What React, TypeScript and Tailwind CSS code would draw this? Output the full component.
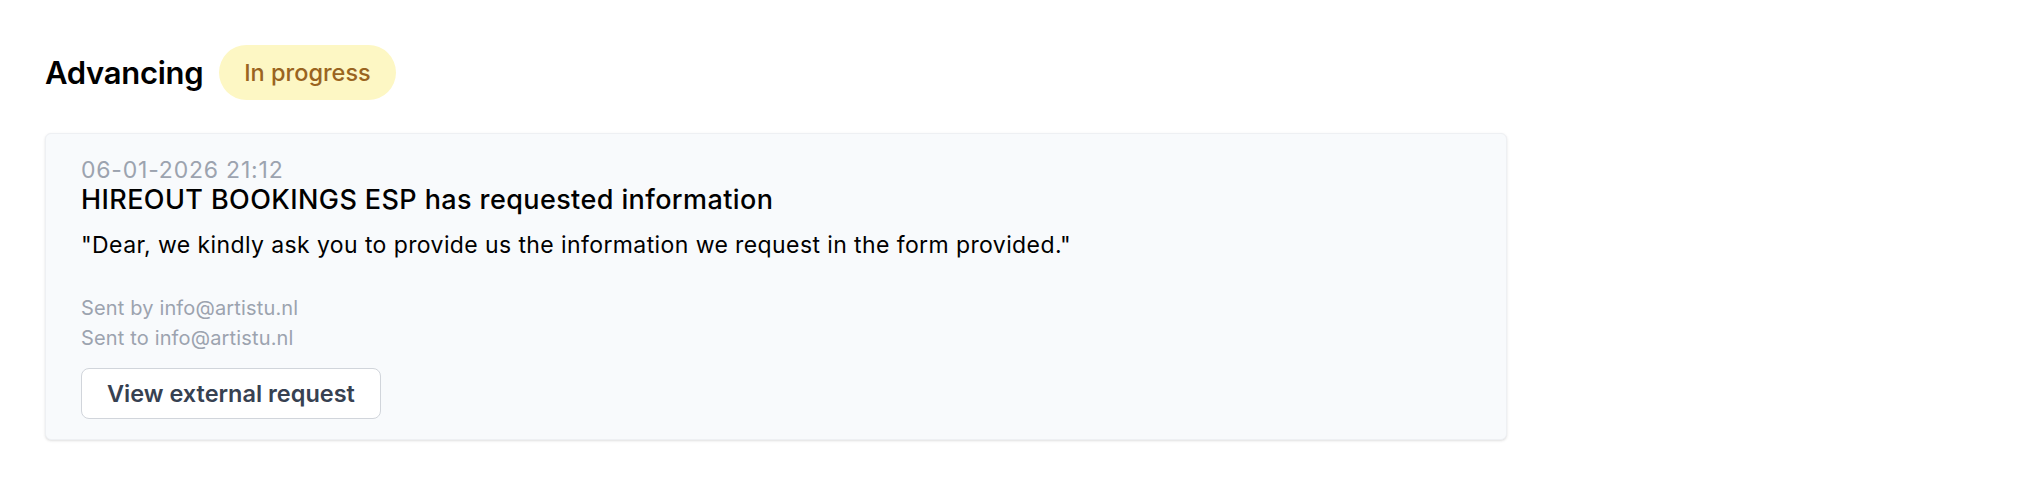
import React from "react";

type Request = {
	sentAt: string;
	title: string;
	message: string;
	sentBy: string;
	sentTo: string;
};

const request: Request = {
	sentAt: "06-01-2026 21:12",
	title: "HIREOUT BOOKINGS ESP has requested information",
	message:
		'"Dear, we kindly ask you to provide us the information we request in the form provided."',
	sentBy: "info@artistu.nl",
	sentTo: "info@artistu.nl",
};

export default function App() {
	return (
		<div className="min-h-[490px] bg-white pl-[45px] pt-[45px] font-['Inter',sans-serif] text-black">
			<div className="flex items-center gap-[16px]">
				<h2 className="text-[31px] leading-[40px] font-semibold tracking-[-0.3px]">
					Advancing
				</h2>
				<span className="flex h-[55px] items-center rounded-full bg-[#fdf7c4] px-[25px] text-[23.5px] font-medium text-[#9a6420]">
					In progress
				</span>
			</div>

			<div className="mt-[33px] w-[1462px] rounded-[6px] border border-[#eef0f3] bg-[#f8fafc] pt-[22px] pb-[20px] pl-[35px] shadow-sm">
				<div className="text-[23px] leading-[28px] tracking-[0.8px] text-[#9ca3af]">
					{request.sentAt}
				</div>
				<h3 className="text-[27px] leading-[32px] font-medium tracking-[0.4px]">
					{request.title}
				</h3>
				<p className="mt-[13px] text-[23px] leading-[32px] tracking-[0.4px]">
					{request.message}
				</p>
				<div className="mt-[32px] text-[20px] leading-[30px] tracking-[0.15px] text-[#9ca3af]">
					<div>Sent by {request.sentBy}</div>
					<div>Sent to {request.sentTo}</div>
				</div>
				<button className="mt-[15px] h-[51px] rounded-[8px] border border-[#d1d5db] bg-white px-[25px] text-[23.5px] font-semibold text-[#374151]">
					View external request
				</button>
			</div>
		</div>
	);
}
